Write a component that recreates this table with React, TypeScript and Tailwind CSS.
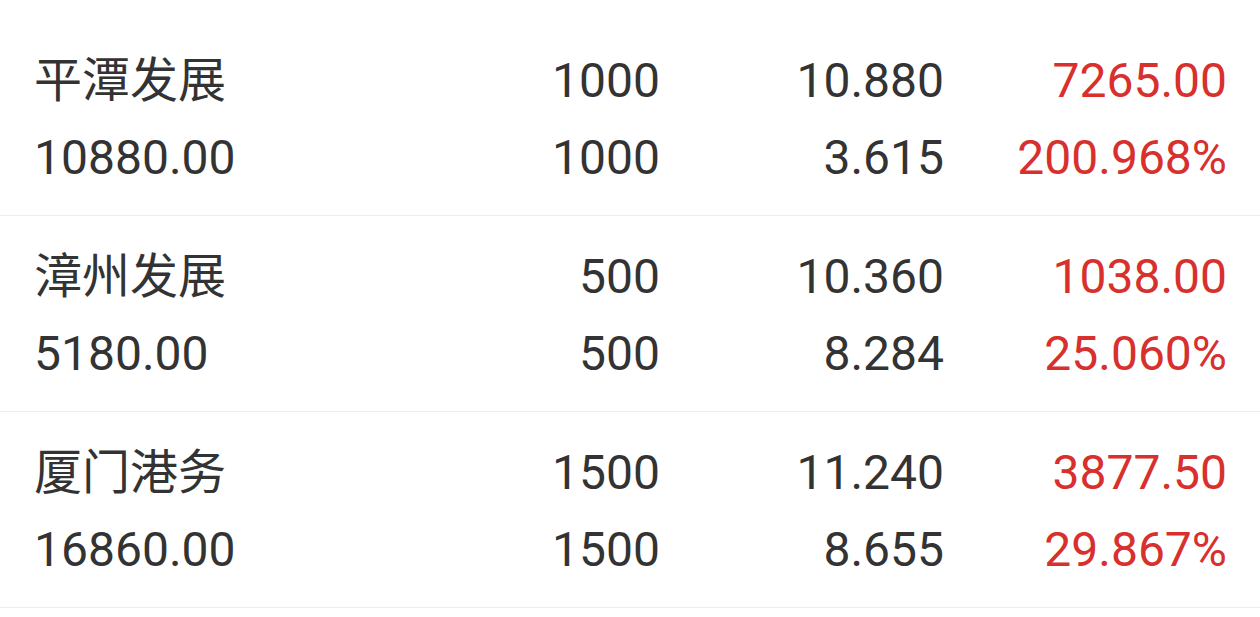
import React from "react";

type Item = {
  name: string;
  amount: string;
  qty1: string;
  qty2: string;
  price: string;
  cost: string;
  profit: string;
  rate: string;
};

const items: Item[] = [
  { name: "平潭发展", amount: "10880.00", qty1: "1000", qty2: "1000", price: "10.880", cost: "3.615", profit: "7265.00", rate: "200.968%" },
  { name: "漳州发展", amount: "5180.00", qty1: "500", qty2: "500", price: "10.360", cost: "8.284", profit: "1038.00", rate: "25.060%" },
  { name: "厦门港务", amount: "16860.00", qty1: "1500", qty2: "1500", price: "11.240", cost: "8.655", profit: "3877.50", rate: "29.867%" },
];

export default function App() {
  return (
    <div
      className="w-[1260px] h-[617px] overflow-hidden bg-white pt-[20px]"
      style={{ fontFamily: 'Roboto, "Noto Sans CJK SC", sans-serif' }}
    >
      {items.map((it) => (
        <div key={it.name} className="pl-[34px] pr-[33px] pt-[22px] pb-[19px] border-b border-[#ececec]">
          <div className="grid grid-cols-[1fr_284px_284px_283px] text-[48px] leading-[77px] text-[#333333]">
            <div>{it.name}</div>
            <div className="text-right">{it.qty1}</div>
            <div className="text-right">{it.price}</div>
            <div className="text-right text-[#d7302d]">{it.profit}</div>
            <div>{it.amount}</div>
            <div className="text-right">{it.qty2}</div>
            <div className="text-right">{it.cost}</div>
            <div className="text-right text-[#d7302d]">{it.rate}</div>
          </div>
        </div>
      ))}
    </div>
  );
}
